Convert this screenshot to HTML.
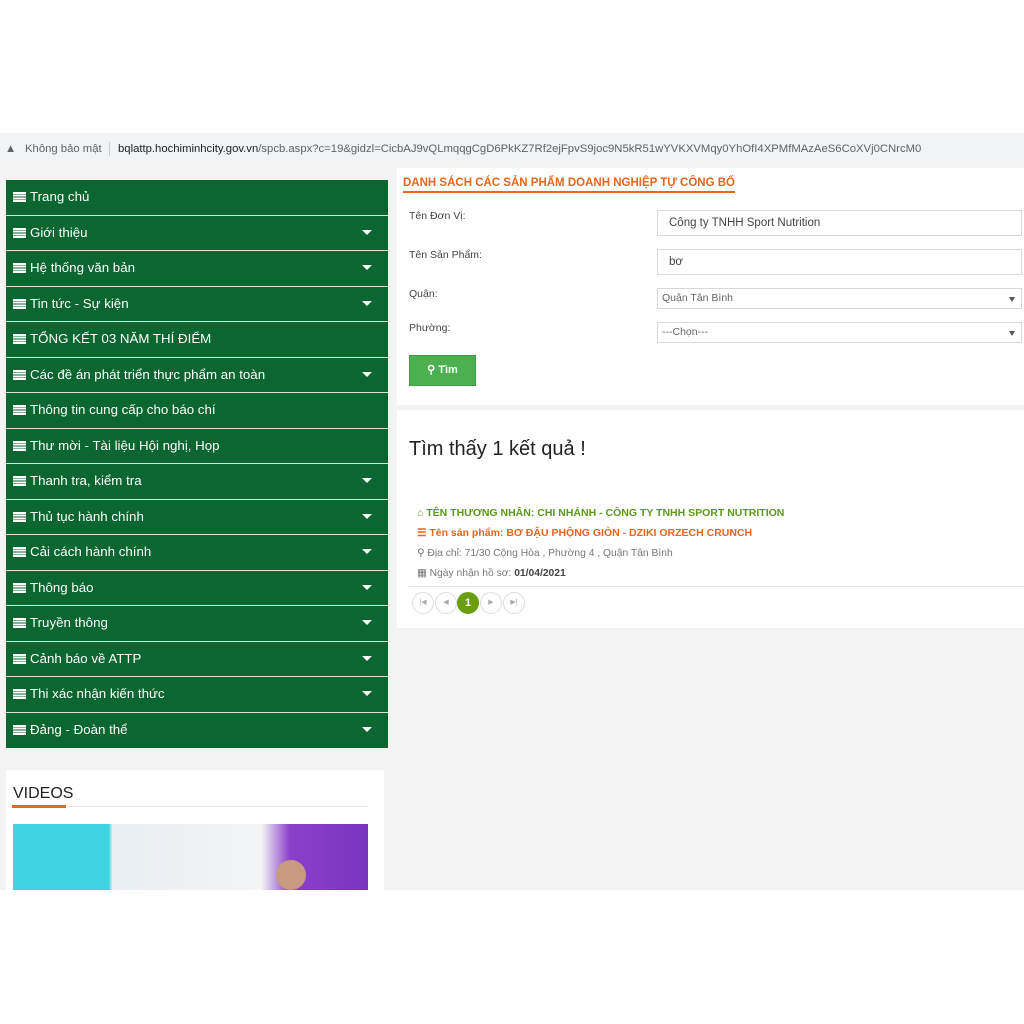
<!DOCTYPE html>
<html><head><meta charset="utf-8"><style>
*{margin:0;padding:0;box-sizing:border-box}
body{width:1024px;height:1024px;background:#fff;font-family:"Liberation Sans",sans-serif;position:relative;overflow:hidden}
.addr{position:absolute;top:133px;left:0;width:1024px;height:32px;background:#f1f3f4;font-size:11.3px;color:#5f6368;line-height:32px}
.page{position:absolute;top:165px;left:0;width:1024px;height:725px;background:#f3f3f3}
.menu{position:absolute;left:6px;top:15px;width:382px}
.mi{height:35.5px;background:#0b6630;border-bottom:1px solid #d8e6dc;color:#fff;font-size:13.3px;line-height:34px;padding-left:7px;position:relative}
.mi .ic{display:inline-block;width:13px;height:10px;vertical-align:-1px;margin-right:4px;background:repeating-linear-gradient(#fff 0 2px,transparent 2px 2.7px)}
.mi .ar{position:absolute;right:16px;top:14px;border-left:5px solid transparent;border-right:5px solid transparent;border-top:5px solid #fff}
.box{position:absolute;background:#fff}
.lbl{position:absolute;left:12px;font-size:10.5px;color:#444}
.inp{position:absolute;left:260px;width:365px;border:1px solid #d8d8d8;background:#fff;font-size:11.5px;color:#444;padding-left:11px}
.sel{font-size:10.5px;color:#666;padding-left:4px}
.sel:after{content:"";position:absolute;right:6px;top:8px;border-left:3.5px solid transparent;border-right:3.5px solid transparent;border-top:5px solid #555}
.pg{position:absolute;top:182px;width:22px;height:22px;border:1px solid #ddd;border-radius:50%;font-size:7px;color:#aaa;text-align:center;line-height:20px;background:#fff}
</style></head><body>
<div class="addr"><span style="position:absolute;left:5px;top:0;color:#5f6368">▲</span><span style="position:absolute;left:25px">Không bảo mật</span><span style="position:absolute;left:109px;top:9px;width:1px;height:14px;background:#ccc"></span><span style="position:absolute;left:118px;color:#202124">bqlattp.hochiminhcity.gov.vn<span style="color:#5f6368">/spcb.aspx?c=19&amp;gidzl=CicbAJ9vQLmqqgCgD6PkKZ7Rf2ejFpvS9joc9N5kR51wYVKXVMqy0YhOfI4XPMfMAzAeS6CoXVj0CNrcM0</span></span></div>
<div class="page">
<div class="menu">
<div class="mi"><span class="ic"></span>Trang chủ</div>
<div class="mi"><span class="ic"></span>Giới thiệu<span class="ar"></span></div>
<div class="mi"><span class="ic"></span>Hệ thống văn bản<span class="ar"></span></div>
<div class="mi"><span class="ic"></span>Tin tức - Sự kiện<span class="ar"></span></div>
<div class="mi"><span class="ic"></span>TỔNG KẾT 03 NĂM THÍ ĐIỂM</div>
<div class="mi"><span class="ic"></span>Các đề án phát triển thực phẩm an toàn<span class="ar"></span></div>
<div class="mi"><span class="ic"></span>Thông tin cung cấp cho báo chí</div>
<div class="mi"><span class="ic"></span>Thư mời - Tài liệu Hội nghị, Họp</div>
<div class="mi"><span class="ic"></span>Thanh tra, kiểm tra<span class="ar"></span></div>
<div class="mi"><span class="ic"></span>Thủ tục hành chính<span class="ar"></span></div>
<div class="mi"><span class="ic"></span>Cải cách hành chính<span class="ar"></span></div>
<div class="mi"><span class="ic"></span>Thông báo<span class="ar"></span></div>
<div class="mi"><span class="ic"></span>Truyền thông<span class="ar"></span></div>
<div class="mi"><span class="ic"></span>Cảnh báo về ATTP<span class="ar"></span></div>
<div class="mi"><span class="ic"></span>Thi xác nhận kiến thức<span class="ar"></span></div>
<div class="mi" style="border-bottom:none"><span class="ic"></span>Đảng - Đoàn thể<span class="ar"></span></div>
</div>
<div class="box" style="left:6px;top:605px;width:378px;height:120px">
<div style="position:absolute;left:7px;top:15px;font-size:16px;color:#222">VIDEOS</div>
<div style="position:absolute;left:6px;top:36px;width:356px;height:1px;background:#e5e5e5"></div>
<div style="position:absolute;left:6px;top:35px;width:54px;height:3px;background:#e8651a"></div>
<div style="position:absolute;left:7px;top:54px;width:355px;height:66px;background:linear-gradient(90deg,#3fd3df 0,#3fd3df 27%,#e9eef2 28%,#f3f5f7 70%,#8a3fc9 78%,#7a35c0 100%)"></div>
<div style="position:absolute;left:270px;top:90px;width:30px;height:30px;background:#c89a80;border-radius:50%"></div>
</div>
<div class="box" style="left:397px;top:3px;width:627px;height:237px">
<div style="position:absolute;left:6px;top:8px;font-size:11.5px;font-weight:bold;color:#e8651a;border-bottom:2px solid #e8651a;line-height:15px">DANH SÁCH CÁC SẢN PHẨM DOANH NGHIỆP TỰ CÔNG BỐ</div>
<div class="lbl" style="top:42px">Tên Đơn Vị:</div>
<div class="lbl" style="top:81px">Tên Sản Phẩm:</div>
<div class="lbl" style="top:120px">Quận:</div>
<div class="lbl" style="top:154px">Phường:</div>
<div class="inp" style="top:42px;height:26px;line-height:24px">Công ty TNHH Sport Nutrition</div>
<div class="inp" style="top:81px;height:26px;line-height:24px">bơ</div>
<div class="inp sel" style="top:120px;height:21px;line-height:19px">Quận Tân Bình</div>
<div class="inp sel" style="top:154px;height:21px;line-height:19px">---Chọn---</div>
<div style="position:absolute;left:12px;top:187px;width:67px;height:31px;background:#4cb050;border:1px solid #3f9a43;color:#fff;font-size:11px;font-weight:bold;text-align:center;line-height:29px">&#9906; Tìm</div>
</div>
<div class="box" style="left:397px;top:245px;width:627px;height:218px">
<div style="position:absolute;left:12px;top:28px;font-size:20px;color:#222">Tìm thấy 1 kết quả !</div>
<div style="position:absolute;left:20px;top:97px;font-size:10.5px;font-weight:bold;color:#5a9a18">⌂ TÊN THƯƠNG NHÂN: CHI NHÁNH - CÔNG TY TNHH SPORT NUTRITION</div>
<div style="position:absolute;left:20px;top:117px;font-size:10.5px;font-weight:bold;color:#e8651a">☰ Tên sản phẩm: BƠ ĐẬU PHỘNG GIÒN - DZIKI ORZECH CRUNCH</div>
<div style="position:absolute;left:20px;top:137px;font-size:10.3px;color:#777">⚲ Địa chỉ: 71/30 Cộng Hòa , Phường 4 , Quận Tân Bình</div>
<div style="position:absolute;left:20px;top:157px;font-size:10.3px;color:#777">▦ Ngày nhận hồ sơ: <b style="color:#444">01/04/2021</b></div>
<div style="position:absolute;left:12px;top:176px;width:615px;height:1px;background:#e3e3e3"></div>
<div class="pg" style="left:15px">|◀</div><div class="pg" style="left:38px">◀</div>
<div class="pg" style="left:60px;background:#6a9e10;border-color:#6a9e10;color:#fff;font-size:11px;font-weight:bold">1</div>
<div class="pg" style="left:83px">▶</div><div class="pg" style="left:106px">▶|</div>
</div>
</div>
</body></html>
